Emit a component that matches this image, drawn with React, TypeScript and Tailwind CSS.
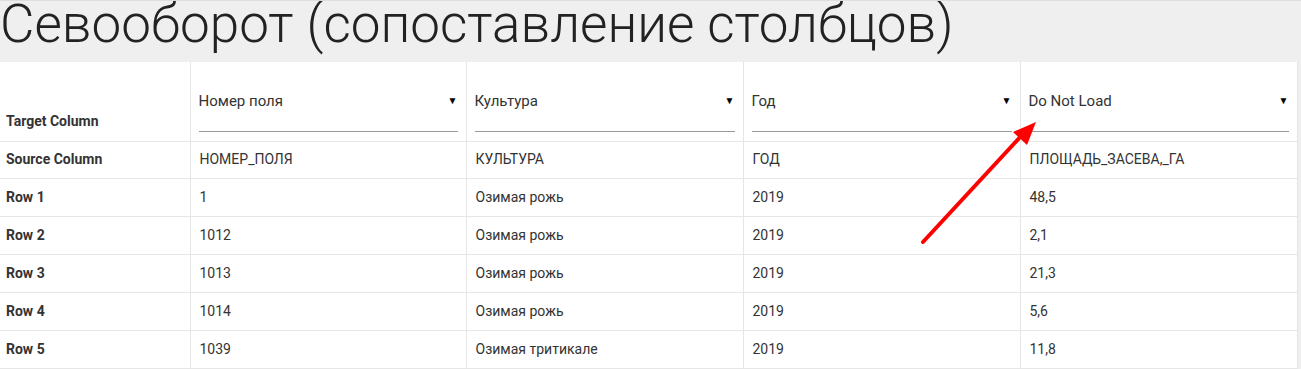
import React from 'react'

const font = { fontFamily: 'Roboto, "Noto Sans", sans-serif' }

const targets = ['Номер поля', 'Культура', 'Год', 'Do Not Load']
const sources = ['НОМЕР_ПОЛЯ', 'КУЛЬТУРА', 'ГОД', 'ПЛОЩАДЬ_ЗАСЕВА,_ГА']

const rows = [
  ['1', 'Озимая рожь', '2019', '48,5'],
  ['1012', 'Озимая рожь', '2019', '2,1'],
  ['1013', 'Озимая рожь', '2019', '21,3'],
  ['1014', 'Озимая рожь', '2019', '5,6'],
  ['1039', 'Озимая тритикале', '2019', '11,8'],
]

const FakeSelect = ({ value }: { value: string }) => (
  <div className='flex items-start justify-between h-[42px] border-b border-[#9a9a9a]'>
    <span className='text-[15px] leading-[22px] text-[#333]'>{value}</span>
    <span className='text-[10px] leading-[22px] text-black'>▼</span>
  </div>
)

export default function App() {
  return (
    <div className='relative w-[1301px] h-[369px] bg-[#efefef] border-t border-[#dedede] overflow-hidden' style={font}>
      <h1 className='h-[61px] text-[53px] font-light leading-[47px] text-[#222] whitespace-nowrap'>
        Севооборот (сопоставление столбцов)
      </h1>

      <table className='w-[1297px] bg-white border-collapse table-fixed text-[14px] text-[#333]'>
        <colgroup>
          <col className='w-[190px]' />
          <col className='w-[276px]' />
          <col className='w-[277px]' />
          <col className='w-[277px]' />
          <col className='w-[277px]' />
        </colgroup>
        <tbody>
          <tr className='h-[79px]'>
            <td className='align-bottom px-[6px] pb-[9px] font-bold border-b border-r border-[#e6e6e6]'>Target Column</td>
            {targets.map((t) => (
              <td key={t} className='align-bottom px-[8px] pb-[9px] border border-t-0 border-[#e6e6e6]'>
                <FakeSelect value={t} />
              </td>
            ))}
          </tr>
          <tr className='h-[37px]'>
            <td className='px-[6px] font-bold border-b border-r border-[#e6e6e6]'>Source Column</td>
            {sources.map((s) => (
              <td key={s} className='px-[9px] border border-[#e6e6e6]'>{s}</td>
            ))}
          </tr>
          {rows.map((r, i) => (
            <tr key={i} className='h-[38px]'>
              <td className='px-[6px] font-bold border-b border-r border-[#e6e6e6]'>Row {i + 1}</td>
              {r.map((c, j) => (
                <td key={j} className='px-[9px] border border-[#e6e6e6]'>{c}</td>
              ))}
            </tr>
          ))}
        </tbody>
      </table>

      {/* red annotation arrow */}
      <svg className='absolute left-0 top-0 pointer-events-none' width='1301' height='369'>
        <line x1='923' y1='241' x2='1022' y2='134' stroke='#ff0000' strokeWidth='4' strokeLinecap='round' />
        <polygon points='1036,121 1013,131 1027,144' fill='#ff0000' />
      </svg>
    </div>
  )
}
